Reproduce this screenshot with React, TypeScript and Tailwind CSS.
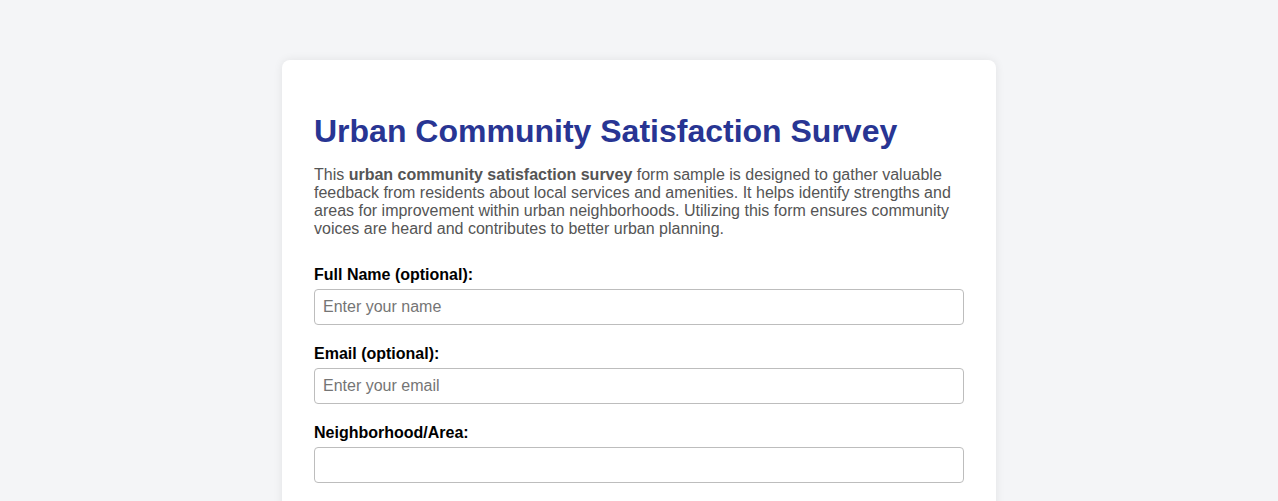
const fields = [
  { id: "name", label: "Full Name (optional):", placeholder: "Enter your name", type: "text" },
  { id: "email", label: "Email (optional):", placeholder: "Enter your email", type: "email" },
  { id: "area", label: "Neighborhood/Area:", placeholder: "", type: "text" },
];

export default function App() {
  return (
    <div className="min-h-screen bg-[#f4f5f7] pt-[60px] pb-10 font-['Liberation_Sans',Arial,sans-serif]">
      <div className="mx-auto w-[714px] rounded-lg bg-white px-8 pt-[53px] pb-8 shadow-[0_0_10px_rgba(0,0,0,0.08)]">
        <h1 className="text-[32px] font-bold leading-[37px] text-[#283593]">
          Urban Community Satisfaction Survey
        </h1>
        <p className="mt-4 text-base leading-[18px] text-[#555]">
          This <strong>urban community satisfaction survey</strong> form sample is designed to gather
          valuable feedback from residents about local services and amenities. It helps identify
          strengths and areas for improvement within urban neighborhoods. Utilizing this form ensures
          community voices are heard and contributes to better urban planning.
        </p>

        <form className="mt-[28px] flex flex-col gap-5">
          {fields.map((f) => (
            <div key={f.id} className="flex flex-col">
              <label htmlFor={f.id} className="text-base font-bold leading-[18px] text-black">
                {f.label}
              </label>
              <input
                id={f.id}
                type={f.type}
                placeholder={f.placeholder}
                className="mt-[5px] h-9 w-full rounded border border-[#bdbdbd] px-2 text-base text-[#333] placeholder:text-[#757575] outline-none"
              />
            </div>
          ))}
        </form>
      </div>
    </div>
  );
}
